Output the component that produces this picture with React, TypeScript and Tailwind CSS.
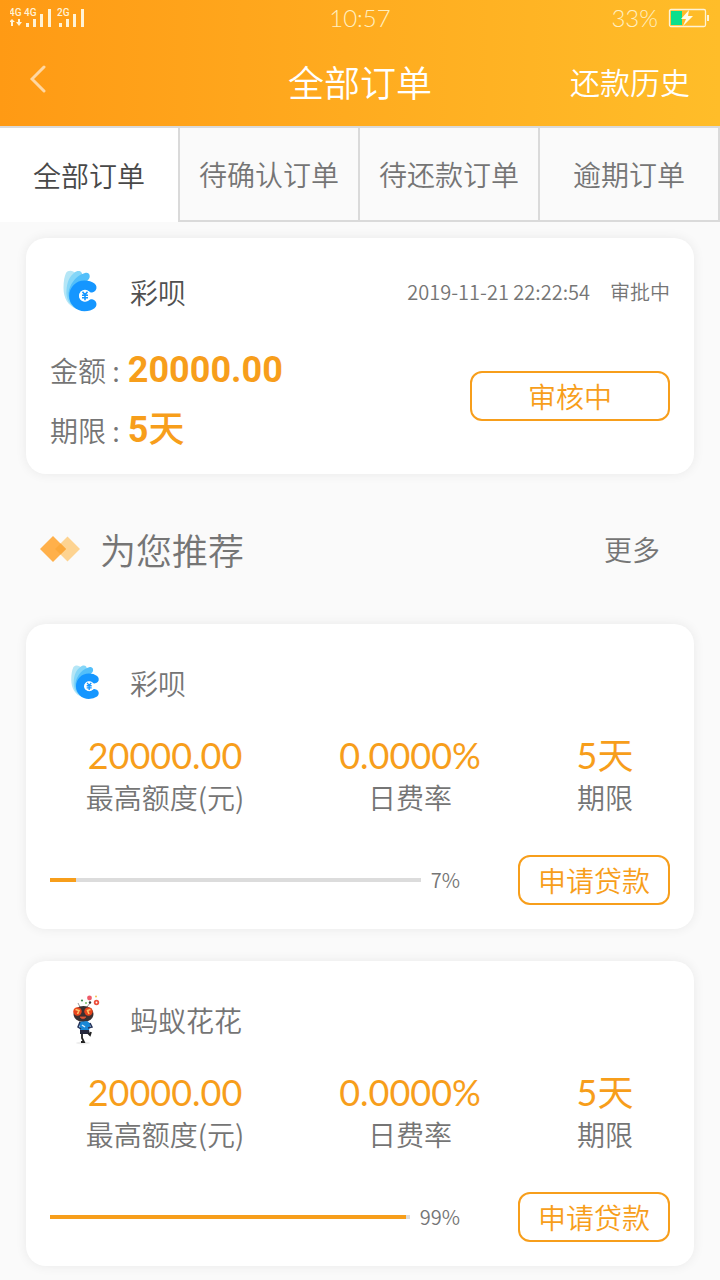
import { useState } from 'react'

interface Product {
  id: number
  name: string
  logo: 'caibei' | 'ant'
  amount: string
  rate: string
  term: string
  progress: number
}

const tabs = ['全部订单', '待确认订单', '待还款订单', '逾期订单']

const products: Product[] = [
  { id: 1, name: '彩呗', logo: 'caibei', amount: '20000.00', rate: '0.0000%', term: '5天', progress: 7 },
  { id: 2, name: '蚂蚁花花', logo: 'ant', amount: '20000.00', rate: '0.0000%', term: '5天', progress: 99 },
]

function CaibeiLogo({ className }: { className: string }) {
  return (
    <svg viewBox="0 0 60 60" className={className} aria-hidden="true">
      <path d="M16 11 C18 8 23 8 26 12 L24 30 L27 47 C18 44 13.5 36 13.5 26 C13.5 19 14.5 14 16 11 Z" fill="#b5e6f6" />
      <path d="M24 11 C28 7.5 33 9 32 14 L25 30 L28 47 C20 44 15.5 37 16.5 28 C17 20 19.5 14.5 24 11 Z" fill="#84d6f8" />
      <path d="M35 11 C39.5 9.5 41.5 15 38 18 L28 30 L29 47 C21 43.5 17 36 19 28 C21.5 19.5 27.5 13 35 11 Z" fill="#53bffa" />
      <path d="M41.5 25.5 C39.5 24 37 23.6 34.5 23.6 A10.3 10.3 0 0 0 34.5 44.2 C37 44.2 39.5 43.8 41.5 42.3" fill="none" stroke="#1596ff" strokeWidth="10" strokeLinecap="round" />
      <circle cx="35" cy="33.8" r="6" fill="#fff" />
      <path d="M32.5 29.8 L35 32.8 L37.5 29.8 M35 32.8 V38.3 M32 33.3 H38 M32 35.8 H38" fill="none" stroke="#1596ff" strokeWidth="1.6" />
    </svg>
  )
}

function AntLogo({ className }: { className: string }) {
  return (
    <svg viewBox="0 0 50 50" className={className} aria-hidden="true">
      <ellipse cx="23" cy="48" rx="7" ry="1.5" fill="#eee" />
      <path d="M20 12 L18 8 M27 12 L30 8" stroke="#999" strokeWidth="1" />
      <ellipse cx="23.5" cy="19" rx="10" ry="8" fill="#3a3032" />
      <circle cx="17.5" cy="16.5" r="4.2" fill="#e8441c" />
      <circle cx="28.5" cy="16.5" r="4.2" fill="#e8441c" />
      <path d="M15.5 14.5 L19 15.5 L17.5 19 M30.5 14.5 L27.5 15.5 L29 19" fill="none" stroke="#ffc36b" strokeWidth="1.6" />
      <path d="M20 22 Q23 25.5 26 22 Z" fill="#ee6a45" stroke="#c94b2f" strokeWidth="1" />
      <path d="M19 27 L27 26 L31 29 L29 35 H20 Z" fill="#1888d6" />
      <path d="M20 27 L18 32 L21 34 M30 28 L32 32 L28 33" fill="none" stroke="#27345c" strokeWidth="1.5" />
      <path d="M22 30 L25 32" stroke="#d9efff" strokeWidth="1.5" />
      <path d="M20 35 H29 L30 39 H20 Z" fill="#26283c" />
      <path d="M22 39 L22 43 L24 47 H21 M28 38 L30 40 L31 37" fill="none" stroke="#222" strokeWidth="1.8" />
      <circle cx="29.5" cy="3" r="2.4" fill="#ee5a68" />
      <circle cx="36.5" cy="7.5" r="2.7" fill="#ee4f3c" />
      <circle cx="36.5" cy="7.5" r="0.9" fill="#fff" />
      <circle cx="22" cy="5.5" r="1.1" fill="#3f8b52" />
      <circle cx="30" cy="7.5" r="1.2" fill="#333" />
      <circle cx="36" cy="1.5" r="1" fill="#f5c04e" />
      <circle cx="26" cy="8" r="1" fill="#7bbf6a" />
    </svg>
  )
}

function StatusBar() {
  return (
    <div className="grid h-9 grid-cols-3 items-center px-[10px] font-['Lato',sans-serif] text-2xl text-[#ffefc0]">
      <svg viewBox="2 0 76 20" className="h-5 w-[76px]" fill="#fff3d6" aria-hidden="true">
        <text x="1" y="8" fontSize="10" fontWeight="500" fontFamily="Roboto, sans-serif">4G</text>
        <text x="16" y="8" fontSize="10" fontWeight="500" fontFamily="Roboto, sans-serif">4G</text>
        <text x="49" y="8" fontSize="10" fontWeight="500" fontFamily="Roboto, sans-serif">2G</text>
        <path d="M4 11 L7 14 H5 V18 H3 V14 H1 Z M10 11 H12 V14 H14 L11 18 L8 14 H10 Z" />
        <path d="M18 15h3v4h-3z M25 11h3v8h-3z M32 6h3v13h-3z M40 1h3v18h-3z" />
        <path d="M51 15h3v4h-3z M58 11h3v8h-3z M65 6h3v13h-3z M73 1h3v18h-3z" />
      </svg>
      <span className="text-center">10:57</span>
      <div className="flex items-center justify-end gap-[10px]">
        <span>33%</span>
        <svg viewBox="0 0 42 20" className="h-5 w-[42px]" aria-hidden="true">
          <rect x="1.5" y="1.5" width="36" height="17" rx="1.5" fill="none" stroke="#fff3d6" strokeWidth="1.3" />
          <rect x="3" y="3" width="11" height="14" fill="#0bdf8c" />
          <path d="M21 2 L13 11 H18 L15 18 L25 8 H20 Z" fill="#fffbe8" />
          <path d="M40 7 V13" stroke="#fff3d6" strokeWidth="2" />
        </svg>
      </div>
    </div>
  )
}

function Stat({ value, label }: { value: string; label: string }) {
  return (
    <div className="flex flex-col items-center">
      <dd className="font-['Lato','Noto_Sans_CJK_SC',sans-serif] text-[36px] leading-[42px] font-normal text-[#f79e1b]">
        {value}
      </dd>
      <dt className="order-last text-[28px] leading-[42px]">{label}</dt>
    </div>
  )
}

function ProductCard({ product }: { product: Product }) {
  return (
    <article className="rounded-[20px] bg-white px-6 pt-[34px] pb-6 shadow-[0_0_12px_rgba(0,0,0,0.07)]">
      <div className="flex items-center gap-5 pl-[10px]">
        {product.logo === 'caibei' ? (
          <CaibeiLogo className="size-[50px]" />
        ) : (
          <AntLogo className="size-[50px]" />
        )}
        <h3 className="text-[28px] leading-[50px]">{product.name}</h3>
      </div>
      <dl className="mt-[26px] grid grid-cols-[23fr_26fr_13fr]">
        <Stat value={product.amount} label="最高额度(元)" />
        <Stat value={product.rate} label="日费率" />
        <Stat value={product.term} label="期限" />
      </dl>
      <div className="mt-[37px] flex items-center">
        <div className="mr-[58px] flex flex-1 items-center gap-[10px]">
          <div
            role="progressbar"
            aria-label={product.name}
            aria-valuenow={product.progress}
            className="h-1 flex-1 bg-[#dcdcdc]"
          >
            <div className="h-full bg-[#f79e1b]" style={{ width: `${product.progress}%` }} />
          </div>
          <span className="text-xl">{product.progress}%</span>
        </div>
        <button className="h-[50px] w-[152px] rounded-xl border-2 border-[#f79e1b] text-[28px] leading-[46px] text-[#f79e1b]">
          申请贷款
        </button>
      </div>
    </article>
  )
}

export default function App() {
  const [activeTab, setActiveTab] = useState(0)

  return (
    <div className="min-h-screen bg-[#fafafa] font-['Noto_Sans_CJK_SC',sans-serif] font-[350] text-[#757575]">
      <header className="bg-linear-to-r from-[#ff9a14] to-[#ffbd29]">
        <StatusBar />
        <div className="grid h-[90px] grid-cols-3 items-center px-[30px] text-white">
          <button aria-label="返回" className="w-10 pb-1 opacity-60">
            <svg viewBox="0 0 16 28" className="h-7 w-4" fill="none" stroke="currentColor" strokeWidth="3" strokeLinecap="round" aria-hidden="true">
              <path d="M14 2 L2 14 L14 26" />
            </svg>
          </button>
          <h1 className="text-center text-[36px]">全部订单</h1>
          <a href="#history" className="text-right text-3xl">还款历史</a>
        </div>
      </header>

      <nav className="grid grid-cols-4 border-t-2 border-[#dadada]">
        {tabs.map((tab, i) => (
          <button
            key={tab}
            onClick={() => setActiveTab(i)}
            className={
              i === activeTab
                ? 'h-[94px] border-r-2 border-[#dadada] bg-white text-[28px] text-[#484848]'
                : 'h-[94px] border-r-2 border-b-2 border-[#dadada] text-[28px]'
            }
          >
            {tab}
          </button>
        ))}
      </nav>

      <main className="px-[26px] pt-4 pb-[14px]">
        <article className="rounded-[20px] bg-white px-6 pt-6 pb-[14px] shadow-[0_0_12px_rgba(0,0,0,0.07)]">
          <div className="flex items-center">
            <CaibeiLogo className="size-[60px]" />
            <h3 className="ml-5 text-[28px] text-[#505050]">彩呗</h3>
            <time className="ml-auto text-xl">2019-11-21 22:22:54</time>
            <span className="ml-5 text-xl">审批中</span>
          </div>
          <div className="mt-[18px] flex items-start justify-between">
            <dl className="text-[28px] leading-[60px]">
              <div className="flex items-center gap-2">
                <dt>金额 :</dt>
                <dd className="font-['Roboto'] text-[36px] font-bold text-[#f79e1b]">20000.00</dd>
              </div>
              <div className="flex items-center gap-2">
                <dt>期限 :</dt>
                <dd className="font-['Roboto','Noto_Sans_CJK_SC'] text-[36px] font-bold text-[#f79e1b]">
                  5<span className="font-medium">天</span>
                </dd>
              </div>
            </dl>
            <button className="mt-[31px] h-[50px] w-[200px] rounded-xl border-2 border-[#f79e1b] text-[28px] leading-[46px] text-[#f79e1b]">
              审核中
            </button>
          </div>
        </article>

        <div className="flex h-[150px] items-center px-[14px]">
          <svg viewBox="0 0 40 26" className="h-[26px] w-10" aria-hidden="true">
            <path d="M27.5 0.5 L40 13 L27.5 25.5 L15 13 Z" fill="#fdd391" />
            <path d="M13 0 L26 13 L13 26 L0 13 Z" fill="#ffb04a" />
            <path d="M20.5 7.5 L26 13 L20.5 18.5 L15 13 Z" fill="#fba83a" />
          </svg>
          <h2 className="ml-5 text-[36px]">为您推荐</h2>
          <a href="#more" className="mr-5 ml-auto text-[28px]">更多</a>
        </div>

        <div className="flex flex-col gap-8">
          {products.map((product) => (
            <ProductCard key={product.id} product={product} />
          ))}
        </div>
      </main>
    </div>
  )
}
